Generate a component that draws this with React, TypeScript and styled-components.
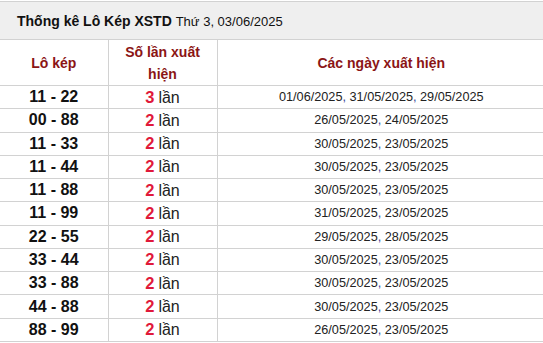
import React from "react";
import styled, { createGlobalStyle } from "styled-components";

const GlobalStyle = createGlobalStyle`
  html, body {
    margin: 0;
    padding: 0;
    background: #fff;
    overflow: hidden;
  }
  body {
    font-family: "Liberation Sans", Arial, sans-serif;
    color: #222;
  }
`;

const Wrap = styled.div`
  width: 543px;
  height: 343px;
  padding-top: 1px;
  box-sizing: border-box;
  overflow: hidden;
`;

const Table = styled.table`
  width: 545px;
  table-layout: fixed;
  border-collapse: collapse;
  border-spacing: 0;
`;

const TitleCell = styled.th`
  height: 37px;
  padding: 0 0 0 17px;
  background: #efefef;
  border-top: 1px solid #d2d2d2;
  border-bottom: 1px solid #d2d2d2;
  text-align: left;
  font-size: 14px;
  font-weight: bold;
  color: #111;
  white-space: nowrap;

  span {
    font-size: 13px;
    font-weight: normal;
  }
`;

const HeadCell = styled.th`
  height: 45px;
  padding: 0 4px;
  border: 1px solid #d2d2d2;
  border-top: none;
  font-size: 14px;
  font-weight: bold;
  line-height: 22px;
  color: #8b1515;
  text-align: center;
  vertical-align: middle;

  &:first-child {
    border-left: none;
  }
  &:last-child {
    border-right: none;
  }
`;

const Cell = styled.td<{ $kind: "pair" | "count" | "dates" }>`
  height: 22.27px;
  padding: 0;
  border: 1px solid #d2d2d2;
  text-align: center;
  vertical-align: middle;
  white-space: nowrap;
  line-height: 18px;
  font-size: ${(p) => (p.$kind === "dates" ? "12.7px" : "16px")};
  font-weight: ${(p) => (p.$kind === "pair" ? "bold" : "normal")};
  color: ${(p) => (p.$kind === "pair" ? "#111" : "#222")};

  &:first-child {
    border-left: none;
  }
  &:last-child {
    border-right: none;
  }
`;

const Times = styled.b`
  color: #e0193a;
  font-size: 16.5px;
  margin-right: 4px;
`;

const Comma = styled.span`
  color: #3b4699;
`;

const rows: { pair: string; count: number; dates: string[] }[] = [
  { pair: "11 - 22", count: 3, dates: ["01/06/2025", "31/05/2025", "29/05/2025"] },
  { pair: "00 - 88", count: 2, dates: ["26/05/2025", "24/05/2025"] },
  { pair: "11 - 33", count: 2, dates: ["30/05/2025", "23/05/2025"] },
  { pair: "11 - 44", count: 2, dates: ["30/05/2025", "23/05/2025"] },
  { pair: "11 - 88", count: 2, dates: ["30/05/2025", "23/05/2025"] },
  { pair: "11 - 99", count: 2, dates: ["31/05/2025", "23/05/2025"] },
  { pair: "22 - 55", count: 2, dates: ["29/05/2025", "28/05/2025"] },
  { pair: "33 - 44", count: 2, dates: ["30/05/2025", "23/05/2025"] },
  { pair: "33 - 88", count: 2, dates: ["30/05/2025", "23/05/2025"] },
  { pair: "44 - 88", count: 2, dates: ["30/05/2025", "23/05/2025"] },
  { pair: "88 - 99", count: 2, dates: ["26/05/2025", "23/05/2025"] },
];

const App = () => {
  return (
    <Wrap>
      <GlobalStyle />
      <Table>
        <colgroup>
          <col style={{ width: 108 }} />
          <col style={{ width: 109 }} />
          <col />
        </colgroup>
        <thead>
          <tr>
            <TitleCell colSpan={3}>
              Thống kê Lô Kép XSTD <span>Thứ 3, 03/06/2025</span>
            </TitleCell>
          </tr>
          <tr>
            <HeadCell>Lô kép</HeadCell>
            <HeadCell>Số lần xuất hiện</HeadCell>
            <HeadCell>Các ngày xuất hiện</HeadCell>
          </tr>
        </thead>
        <tbody>
          {rows.map((row) => (
            <tr key={row.pair}>
              <Cell $kind="pair">{row.pair}</Cell>
              <Cell $kind="count">
                <Times>{row.count}</Times>lần
              </Cell>
              <Cell $kind="dates">
                {row.dates.map((d, i) => (
                  <React.Fragment key={d + i}>
                    {i > 0 && <Comma>, </Comma>}
                    {d}
                  </React.Fragment>
                ))}
              </Cell>
            </tr>
          ))}
        </tbody>
      </Table>
    </Wrap>
  );
};

export default App;
